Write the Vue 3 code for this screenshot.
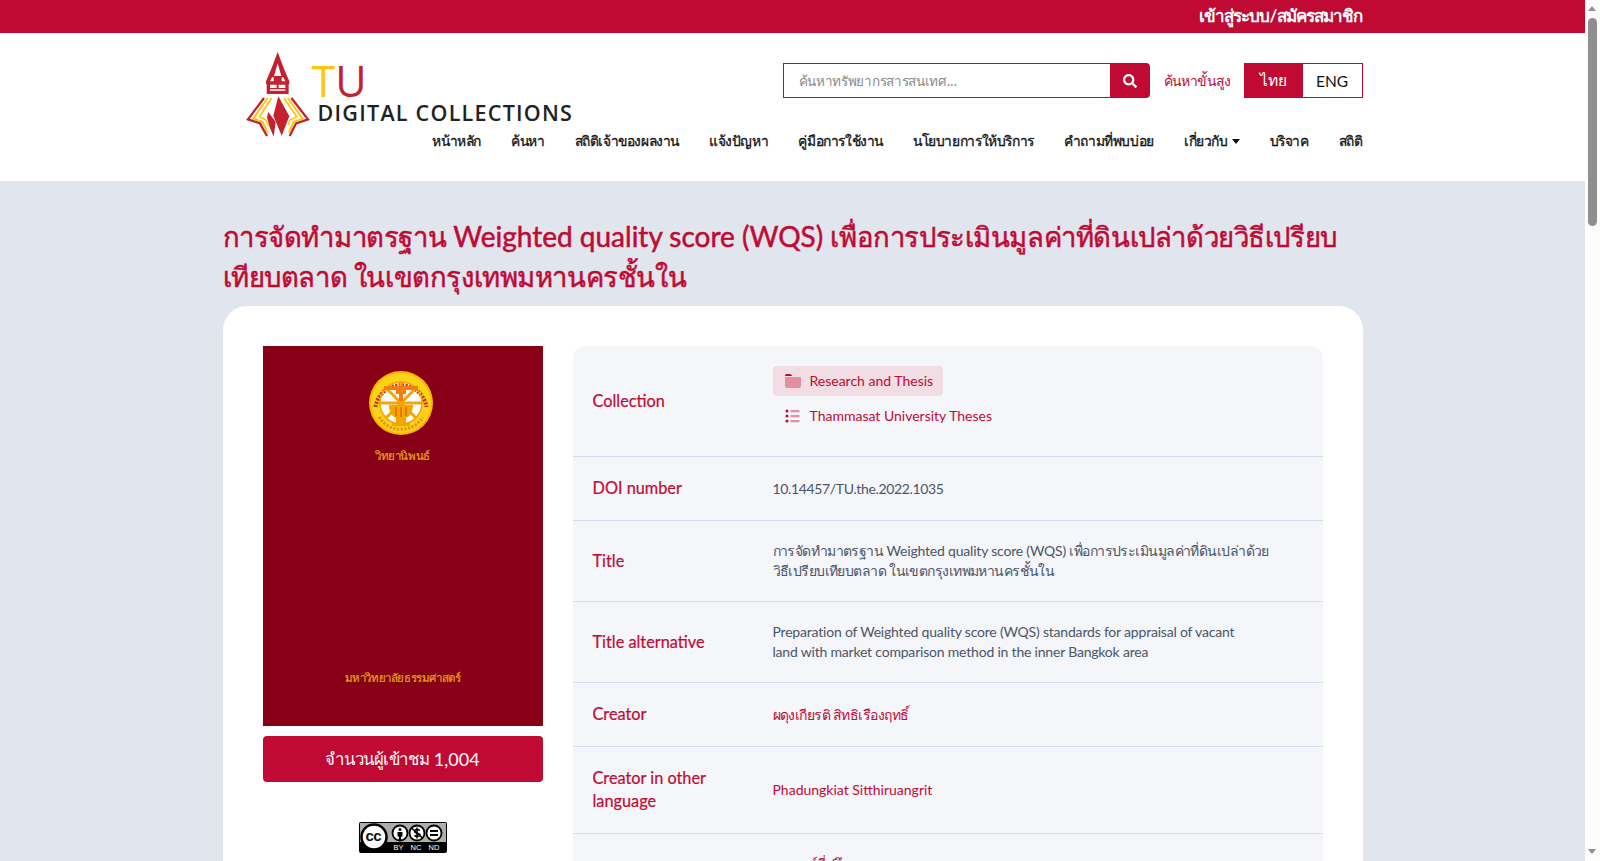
<script setup>
const menu = ['หน้าหลัก', 'ค้นหา', 'สถิติเจ้าของผลงาน', 'แจ้งปัญหา', 'คู่มือการใช้งาน', 'นโยบายการให้บริการ', 'คำถามที่พบบ่อย', 'เกี่ยวกับ', 'บริจาค', 'สถิติ']
</script>

<template>
  <div class="page">
    <div class="topbar">
      <div class="wrap topbar-in"><a class="login">เข้าสู่ระบบ/สมัครสมาชิก</a></div>
    </div>

    <header class="head">
      <div class="wrap head-in">
        <div class="logo">
          <svg class="logo-mark" viewBox="0 0 225 276" width="75" height="92">
            <path fill="#c4202f" d="M113 12l18 48 17 40v8H78v-8l17-40z" />
            <path fill="#fff" d="M113 46l11 38h-22zM96 88h5v12H90zM125 88h5l6 12h-11z" />
            <path fill="#c4202f" d="M80 108h66v30H80z" />
            <path fill="#fff" d="M90 110h20v10H90zM116 110h20v10h-20zM90 124h46v4H90z" />
            <path fill="#c4202f" d="M115 145l33 60-23 58-25-60z" />
            <path fill="#c4202f" d="M85 192l22 30-6 44-12-28-8-30z" />
            <g fill="none" stroke-linejoin="miter">
              <path stroke="#c4202f" stroke-width="7" d="M72 150L24 214l36 12 21 38" />
              <path stroke="#ffc20e" stroke-width="6" d="M83 150L40 212l28 10 15 32" />
              <path stroke="#ffc20e" stroke-width="5" d="M95 150L58 206l20 10 8 18" />
              <path stroke="#c4202f" stroke-width="7" d="M154 150l50 64-36 12-19 38" />
              <path stroke="#ffc20e" stroke-width="6" d="M143 150l45 62-28 10-13 32" />
              <path stroke="#ffc20e" stroke-width="5" d="M132 150l38 56-20 10-5 14" />
            </g>
          </svg>
          <div class="logo-text">
            <div class="logo-tu"><span class="yellow">T</span><span class="red">U</span></div>
            <div class="logo-dc">DIGITAL COLLECTIONS</div>
          </div>
        </div>

        <div class="head-right">
          <div class="search-row">
            <div class="search">
              <input class="search-input" placeholder="ค้นหาทรัพยากรสารสนเทศ..." />
              <button class="search-btn" aria-label="search">
                <svg viewBox="0 0 512 512" width="14" height="14">
                  <path fill="#fff" d="M505 442.700L405.300 343c-4.500-4.500-10.600-7-17-7H372c27.600-35.300 44-79.700 44-128C416 93.100 322.900 0 208 0S0 93.100 0 208s93.100 208 208 208c48.300 0 92.700-16.400 128-44v16.300c0 6.400 2.500 12.500 7 17l99.700 99.700c9.400 9.400 24.600 9.400 33.900 0l28.300-28.300c9.400-9.400 9.400-24.600.1-34zM208 336c-70.700 0-128-57.200-128-128 0-70.700 57.200-128 128-128 70.700 0 128 57.200 128 128 0 70.700-57.200 128-128 128z" />
                </svg>
              </button>
            </div>
            <a class="adv">ค้นหาขั้นสูง</a>
            <div class="lang">
              <span class="lang-th">ไทย</span>
              <span class="lang-en">ENG</span>
            </div>
          </div>
          <nav class="menu">
            <a v-for="m in menu" :key="m" class="menu-item">
              {{ m }}<span v-if="m === 'เกี่ยวกับ'" class="caret"></span>
            </a>
          </nav>
        </div>
      </div>
    </header>

    <main class="wrap main">
      <h1 class="title">
        <span class="title-th">การจัดทำมาตรฐาน</span> Weighted quality score (WQS) <span class="title-th">เพื่อการประเมินมูลค่าที่ดินเปล่าด้วยวิธีเปรียบ<br>เทียบตลาด ในเขตกรุงเทพมหานครชั้นใน</span>
      </h1>
      <section class="card">
        <aside class="side">
          <div class="cover">
            <svg class="seal" viewBox="0 0 64 64" width="64" height="64">
              <circle cx="32" cy="32" r="32" fill="#ffb000" />
              <circle cx="32" cy="32" r="30" fill="#f9d21a" />
              <circle cx="32" cy="32" r="21" fill="#fff" />
              <path fill="none" stroke="#b8401a" stroke-width="4" stroke-dasharray="2.200 1.200" d="M6.500 36A25.800 25.800 0 0 1 57.500 36" />
              <path fill="none" stroke="#e8921a" stroke-width="3" stroke-dasharray="2.200 1.500" d="M10 46A25.800 25.800 0 0 0 54 46" />
              <g stroke="#f5a500" stroke-width="3">
                <path d="M32 10v44M10 32h44M16.500 16.500l31 31M47.500 16.500l-31 31" />
              </g>
              <circle cx="32" cy="32" r="21" fill="none" stroke="#f5a500" stroke-width="1.500" />
              <path fill="#f47f10" d="M15 15h34v4H37v4h-3v7h-4v-7h-3v-4H15z" />
              <path fill="#f5a500" d="M20 34h24c0 8-4 12-7 13v5h4v3H23v-3h4v-5c-3-1-7-5-7-13z" />
              <path stroke="#b8401a" stroke-width=".8" d="M27 36v9M32 36v10M37 36v9" />
            </svg>
            <div class="cover-kind">วิทยานิพนธ์</div>
            <div class="cover-uni">มหาวิทยาลัยธรรมศาสตร์</div>
          </div>
          <div class="views"><span class="views-th">จำนวนผู้เข้าชม</span>&nbsp;1,004</div>
          <div class="cc">
            <svg class="cc-art" viewBox="0 0 88 31" width="88" height="31">
              <rect x="0" y="0" width="88" height="31" rx="2" fill="#000" />
              <rect x="1" y="1" width="86" height="19" fill="#abb1aa" />
              <circle cx="15" cy="15" r="12.500" fill="#fff" stroke="#000" stroke-width="2.500" />
              <circle cx="41" cy="11" r="7.500" fill="#fff" stroke="#000" stroke-width="1.800" />
              <circle cx="41" cy="7.500" r="1.500" fill="#000" />
              <path fill="#000" d="M38.500 10h5v4.500h-1.400V18h-2.200v-3.500h-1.400z" />
              <circle cx="58" cy="11" r="7.500" fill="#fff" stroke="#000" stroke-width="1.800" />
              <path stroke="#000" stroke-width="1.500" d="M52.500 6l11 10" />
              <path fill="none" stroke="#000" stroke-width="1.500" d="M61 8.500c-2-1.500-5.500-1.200-5.500.8 0 2.500 5.500 1.200 5.500 3.500 0 1.800-3.500 2-5.500.7M58 5.500v11" />
              <circle cx="75" cy="11" r="7.500" fill="#fff" stroke="#000" stroke-width="1.800" />
              <path fill="#000" d="M71 8h8v2h-8zM71 12h8v2h-8z" />
            </svg>
            <span class="cc-c">cc</span>
            <span class="cc-by">BY</span><span class="cc-nc">NC</span><span class="cc-nd">ND</span>
          </div>
        </aside>

        <div class="table">
          <div class="row row-collection">
            <div class="label">Collection</div>
            <div class="value value-crumbs">
              <a class="crumb crumb-on">
                <svg viewBox="0 0 16 14" width="16" height="14">
                  <path fill="#e0909f" d="M0 3h15a1 1 0 0 1 1 1v8a2 2 0 0 1-2 2H2a2 2 0 0 1-2-2z" />
                  <path fill="#c00a33" d="M1.500 0h4l2 2H0v-.5A1.500 1.500 0 0 1 1.500 0z" />
                </svg>
                Research and Thesis
              </a>
              <a class="crumb">
                <svg viewBox="0 0 16 14" width="16" height="14">
                  <circle cx="2" cy="2" r="1.500" fill="#c00a33" />
                  <circle cx="2" cy="7" r="1.500" fill="#c00a33" />
                  <circle cx="2" cy="12" r="1.500" fill="#c00a33" />
                  <path fill="#e0909f" d="M5.500 1h9v2.200h-9zM5.500 6h9v2.200h-9zM5.500 11h9v2.200h-9z" />
                </svg>
                Thammasat University Theses
              </a>
            </div>
          </div>
          <div class="row row-doi">
            <div class="label">DOI number</div>
            <div class="value doi">10.14457/TU.the.2022.1035</div>
          </div>
          <div class="row">
            <div class="label">Title</div>
            <div class="value alt"><span class="tv">การจัดทำมาตรฐาน</span> Weighted quality score (WQS) <span class="tv">เพื่อการประเมินมูลค่าที่ดินเปล่าด้วย<br>วิธีเปรียบเทียบตลาด ในเขตกรุงเทพมหานครชั้นใน</span></div>
          </div>
          <div class="row">
            <div class="label">Title alternative</div>
            <div class="value alt">Preparation of Weighted quality score (WQS) standards for appraisal of vacant<br>land with market comparison method in the inner Bangkok area</div>
          </div>
          <div class="row row-doi">
            <div class="label">Creator</div>
            <div class="value link tv">ผดุงเกียรติ สิทธิเรืองฤทธิ์</div>
          </div>
          <div class="row row-two">
            <div class="label">Creator in other language</div>
            <div class="value link">Phadungkiat Sitthiruangrit</div>
          </div>
          <div class="row">
            <div class="label">Advisor</div>
            <div class="value link tv">อาจารย์ที่ปรึกษา<br>อาจารย์ที่ปรึกษาร่วม</div>
          </div>
        </div>
      </section>
    </main>

    <div class="scrollbar">
      <span class="sb-up"></span>
      <span class="sb-thumb"></span>
      <span class="sb-down"></span>
    </div>
  </div>
</template>

<style>
html, body { margin: 0; background: #e1e5ee; }
</style>

<style scoped>
.page { font-family: Lato, "Noto Sans", sans-serif; color: #111; background: #e1e5ee; min-height: 3400px; width: 1585px; }
.wrap { width: 1140px; margin: 0 auto; }
.topbar { background: #c00a33; height: 33px; }
.topbar-in { display: flex; justify-content: flex-end; align-items: center; height: 31px; }
.login { color: #fff; font-size: 17px; font-weight: 700; letter-spacing: -.9px; }

.head { background: #fff; height: 148px; }
.head-in { display: flex; justify-content: space-between; }
.logo { display: flex; flex: none; margin: 15px 0 0 17px; }
.logo-text { margin-left: -3px; }
.logo-tu { font-family: "Open Sans", sans-serif; font-size: 43px; line-height: 44px; margin-top: 11px; }
.yellow { color: #fdc70c; }
.red { color: #c4202f; }
.logo-dc { font-family: "Open Sans", sans-serif; font-size: 21.500px; font-weight: 600; line-height: 26px; letter-spacing: 1.250px; color: #222; margin: -3px 0 0 6px; white-space: nowrap; }

.head-right { display: flex; flex-direction: column; align-items: flex-end; width: 620px; }
.search-row { display: flex; align-items: center; margin-top: 30px; }
.search { display: flex; width: 367px; height: 35px; }
.search-input { flex: 1; min-width: 0; box-sizing: border-box; border: 1px solid #c00a33; border-right: 0; padding: 0 15px; font: 13.500px "Noto Sans", sans-serif; letter-spacing: -.3px; outline: 0; }
.search-input::placeholder { color: #8a8a8a; }
.search-btn { width: 40px; border: 0; padding: 0; background: #c00a33; border-radius: 0 4px 4px 0; display: flex; align-items: center; justify-content: center; }
.adv { color: #c00a33; font-size: 14px; letter-spacing: -.6px; margin: 0 14px; width: 66px; white-space: nowrap; }
.lang { display: flex; height: 35px; border: 1px solid #c00a33; box-sizing: border-box; font-size: 15.500px; }
.lang span { display: flex; align-items: center; justify-content: center; }
.lang-th { width: 58px; background: #c00a33; color: #fff; }
.lang-en { width: 59px; color: #111; }

.menu { display: flex; gap: 30px; margin-top: 31px; font-size: 13.800px; letter-spacing: -.39px; line-height: 24px; white-space: nowrap; -webkit-text-stroke: .3px #111; }
.caret { display: inline-block; margin-left: 4px; vertical-align: 2px; border: 4.500px solid transparent; border-top: 5px solid #111; border-bottom: 0; }

.main { padding-top: 35px; }
.title { margin: 0 0 10px; font-size: 28px; line-height: 40px; font-weight: 400; color: #c00a33; white-space: nowrap; -webkit-text-stroke: .5px #c00a33; }
.title-th { font-size: 27.500px; letter-spacing: -.015em; line-height: 1; }
.card { display: flex; gap: 30px; background: #fff; border-radius: 24px; padding: 40px; }
.side { width: 280px; flex: none; }
.cover { height: 380px; background: #880015; display: flex; flex-direction: column; align-items: center; color: #e6a21d; font-size: 11.500px; letter-spacing: -.4px; -webkit-text-stroke: .2px #e6a21d; }
.seal { margin: 25px 3px 0 0; }
.cover-kind { margin-top: 12px; }
.cover-uni { margin-top: auto; margin-bottom: 39px; }
.views { height: 46px; margin-top: 10px; background: #c00a33; color: #fff; border-radius: 4px; font-size: 18px; display: flex; align-items: center; justify-content: center; }
.views-th { font-size: 16.800px; letter-spacing: -.025em; }
.cc { position: relative; width: 88px; height: 31px; margin: 40px auto 0; }
.cc-art { display: block; }
.cc-c { position: absolute; left: 7px; top: 3px; font: bold 15px/22px "Liberation Sans", sans-serif; letter-spacing: -.5px; }
.cc-by, .cc-nc, .cc-nd { position: absolute; top: 21px; color: #fff; font: 7.500px/9px "Liberation Sans", sans-serif; }
.cc-by { left: 35px; }
.cc-nc { left: 52px; }
.cc-nd { left: 70px; }

.table { flex: 1; min-width: 0; background: #f4f6fa; border-radius: 12px; font-size: 14px; }
.row { display: flex; align-items: center; box-sizing: border-box; padding: 20px; border-bottom: 1px solid #d5dcef; }
.row:last-child { border-bottom: 0; }
.row-collection { height: 111px; padding-top: 0; padding-bottom: 0; }
.row-doi { height: 64px; }
.row-two { padding-top: 21px; padding-bottom: 21px; }
.label { width: 180px; flex: none; color: #c00a33; font-size: 16.300px; line-height: 23px; margin-top: -2px; padding-right: 20px; box-sizing: border-box; -webkit-text-stroke: .2px #c00a33; }
.value { width: 510px; color: #4b5568; line-height: 20px; white-space: nowrap; }
.value-crumbs { margin-bottom: 5px; }
.doi { letter-spacing: -.35px; }
.alt { letter-spacing: -.2px; }
.tv { letter-spacing: -.04em; }
.link { color: #c00a33; }
.crumb { display: flex; align-items: center; gap: 9px; height: 30px; padding: 0 10px 0 12px; width: max-content; color: #c00a33; border-radius: 4px; margin-top: 5px; }
.crumb-on { background: #f1dde3; margin-top: 0; }

.scrollbar { position: fixed; top: 0; right: 0; width: 15px; height: 100%; background: #fcfcfc; }
.sb-up, .sb-down { position: absolute; left: 3px; border: 4.500px solid transparent; }
.sb-up { top: 6px; border-top: 0; border-bottom: 5px solid #8f8f8f; }
.sb-down { bottom: 7px; border-bottom: 0; border-top: 5px solid #8f8f8f; }
.sb-thumb { position: absolute; left: 3px; top: 18px; width: 9px; height: 208px; background: #8f8f8f; border-radius: 5px; }
</style>
